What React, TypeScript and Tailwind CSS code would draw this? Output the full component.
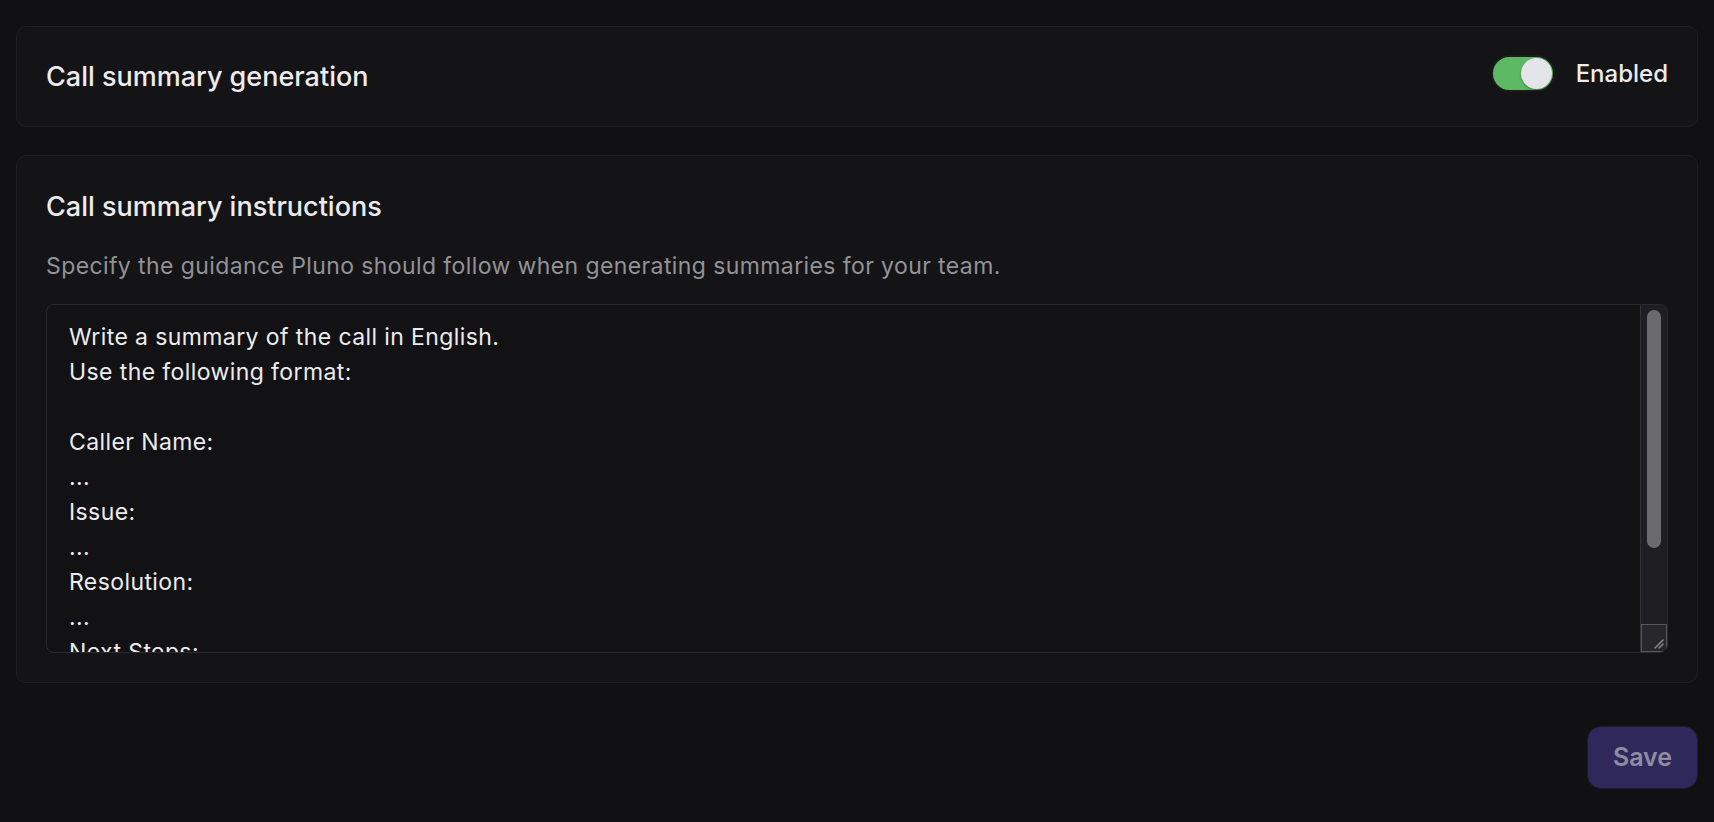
import { useCallback, useEffect, useRef, useState } from "react";

const defaultInstructions = [
  "Write a summary of the call in English.",
  "Use the following format:",
  "",
  "Caller Name:",
  "...",
  "Issue:",
  "...",
  "Resolution:",
  "...",
  "Next Steps:",
  "...",
  "",
].join("\n");

function Toggle({ checked, onChange }: { checked: boolean; onChange: (v: boolean) => void }) {
  return (
    <button
      type="button"
      role="switch"
      aria-checked={checked}
      onClick={() => onChange(!checked)}
      className={`flex h-[37px] w-[64px] items-center rounded-full border-2 border-[#1b1b1d] p-[1px] ${
        checked ? "justify-end bg-[#5cb862]" : "justify-start bg-[#3a3a3e]"
      }`}
    >
      <span className="block h-[31px] w-[31px] rounded-full bg-[#e4e5ea] shadow-[0_1px_2px_rgba(0,0,0,0.35)]" />
    </button>
  );
}

// track length available to the thumb (column height minus resizer and insets)
const trackLength = 347 - 28 - 10;

export default function App() {
  const [enabled, setEnabled] = useState(true);
  const [instructions, setInstructions] = useState(defaultInstructions);
  const [thumb, setThumb] = useState({ top: 0, height: 237 });
  const areaRef = useRef<HTMLTextAreaElement>(null);

  const syncThumb = useCallback(() => {
    const el = areaRef.current;
    if (!el) {
      return;
    }
    const ratio = Math.min(1, el.clientHeight / el.scrollHeight);
    const height = Math.round(trackLength * ratio);
    const maxScroll = el.scrollHeight - el.clientHeight;
    const top = maxScroll > 0 ? Math.round((el.scrollTop / maxScroll) * (trackLength - height)) : 0;
    setThumb({ top, height });
  }, []);

  useEffect(() => {
    syncThumb();
  }, [instructions, syncThumb]);

  return (
    <div
      className="min-h-screen bg-[#111113] px-[16px] pt-[26px] text-[#ececee]"
      style={{ fontFamily: "Inter, 'Noto Sans', sans-serif" }}
    >
      <section className="flex h-[101px] items-center justify-between rounded-[10px] border border-[#1f1f22] bg-[#141416] px-[29px]">
        <h2 className="text-[27px] leading-[44px] font-medium">Call summary generation</h2>
        <div className="mb-[6px] flex items-center gap-[21px]">
          <Toggle checked={enabled} onChange={setEnabled} />
          <span className="text-[24px] leading-[40px] font-medium">{enabled ? "Enabled" : "Disabled"}</span>
        </div>
      </section>

      <section className="mt-[28px] rounded-[10px] border border-[#1f1f22] bg-[#141416] px-[29px] pt-[29px] pb-[29px]">
        <h2 className="text-[27px] leading-[44px] font-medium">Call summary instructions</h2>
        <p className="mt-[20px] text-[23px] leading-[35px] tracking-[0.4px] text-[#929297]">
          Specify the guidance Pluno should follow when generating summaries for your team.
        </p>
        <div className="mt-[20px] flex h-[349px] overflow-hidden rounded-[8px] border border-[#2a2a2e] bg-[#121214]">
          <textarea
            ref={areaRef}
            value={instructions}
            onChange={(e) => setInstructions(e.target.value)}
            onScroll={syncThumb}
            className="h-full min-w-0 flex-1 resize-none overflow-hidden bg-transparent pt-[15px] pr-[12px] pb-[15px] pl-[22px] text-[23px] leading-[35px] tracking-[0.4px] text-[#ececee] outline-none"
            style={{ fontFamily: "Inter, 'Noto Sans', sans-serif" }}
          />
          <div className="flex w-[27px] flex-col border-l border-[#323236] bg-[#1f1f23]">
            <div className="flex-1 px-[6px] pt-[5px] pb-[5px]">
              <div
                className="w-full rounded-full bg-[#6b6b6f]"
                style={{ height: thumb.height, marginTop: thumb.top }}
              />
            </div>
            <div className="flex h-[28px] items-end justify-end border border-[#58585c] bg-[#27272b] p-[2px]">
              <svg width="12" height="12" viewBox="0 0 12 12" fill="none">
                <path d="M11 3L3 11M11 7L7 11" stroke="#8a8a8e" strokeWidth="1.5" strokeLinecap="round" />
              </svg>
            </div>
          </div>
        </div>
      </section>

      <div className="mt-[43px] flex justify-end">
        <button
          type="button"
          className="h-[63px] w-[111px] rounded-[14px] border border-[#1e1b36] bg-[#2f295b] text-[25px] font-semibold text-[#8f8ca2]"
        >
          Save
        </button>
      </div>
    </div>
  );
}
